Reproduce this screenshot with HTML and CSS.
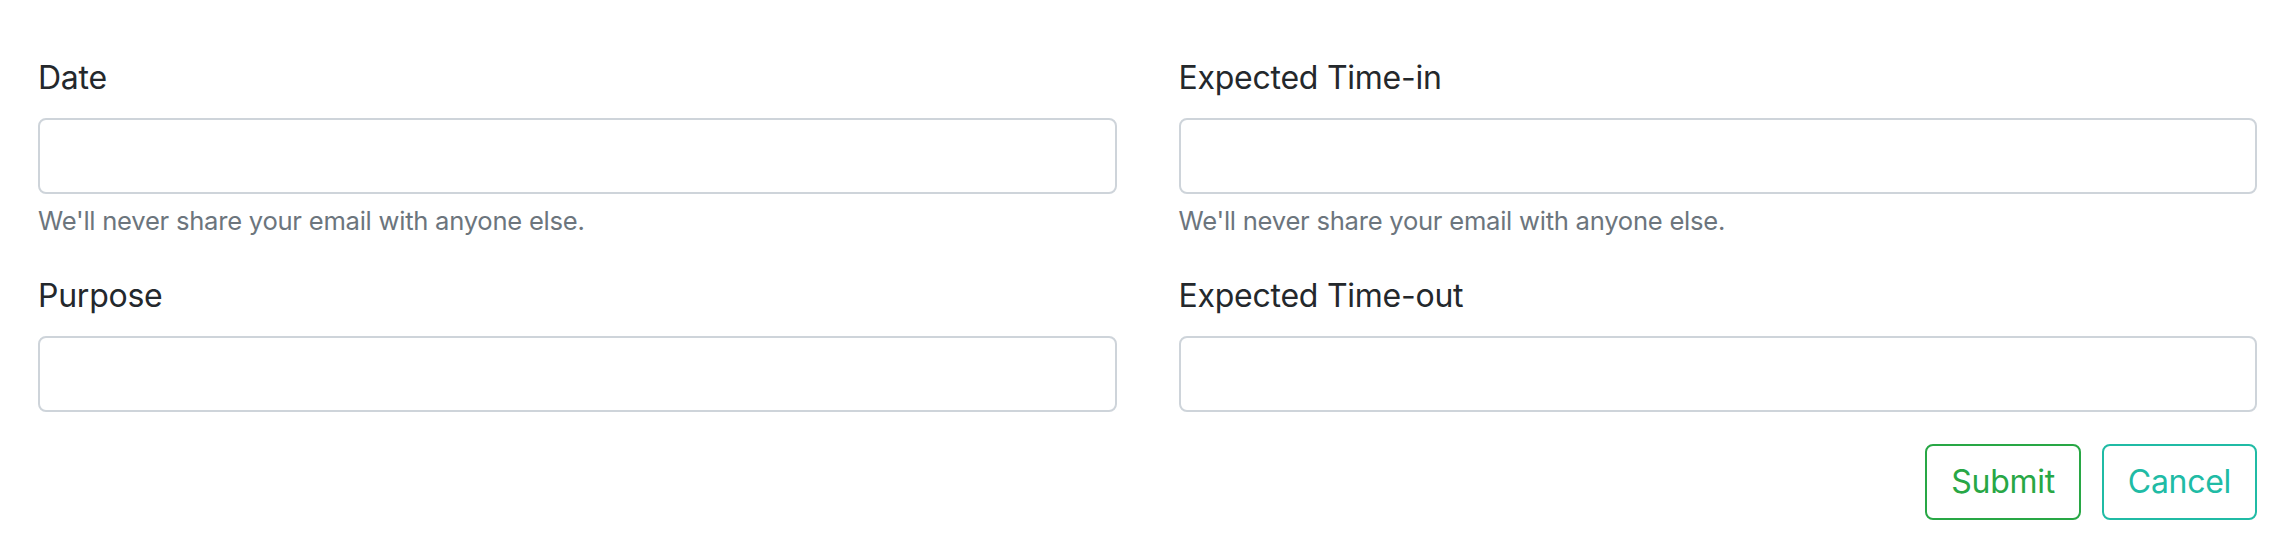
FILE: index.html
```html
<!DOCTYPE html>
<html lang="en">
<head>
<meta charset="utf-8">
<title>Visit form</title>
<link rel="stylesheet" href="styles.css">
</head>
<body>
<form class="form">
  <div class="grid">
    <div class="form-group">
      <label class="label" for="date">Date</label>
      <input class="control" id="date" type="text">
      <small class="help">We'll never share your email with anyone else.</small>
    </div>
    <div class="form-group">
      <label class="label" for="timein">Expected Time-in</label>
      <input class="control" id="timein" type="text">
      <small class="help">We'll never share your email with anyone else.</small>
    </div>
    <div class="form-group">
      <label class="label" for="purpose">Purpose</label>
      <input class="control" id="purpose" type="text">
    </div>
    <div class="form-group">
      <label class="label" for="timeout">Expected Time-out</label>
      <input class="control" id="timeout" type="text">
    </div>
  </div>
  <div class="actions">
    <button type="submit" class="btn btn-submit">Submit</button>
    <button type="button" class="btn btn-cancel">Cancel</button>
  </div>
</form>
</body>
</html>
```

FILE: styles.css
```css
html, body {
  margin: 0;
  padding: 0;
  background: #ffffff;
}

body {
  font-family: Inter, "Noto Sans", "Liberation Sans", sans-serif;
  font-size: 32px;
  line-height: 1.5;
  color: #212529;
  letter-spacing: -0.25px;
}

.form {
  padding: 54px 33px 0 38px;
}

.grid {
  display: grid;
  grid-template-columns: 1fr 1fr;
  column-gap: 62px;
}

.form-group {
  display: flex;
  flex-direction: column;
  margin-bottom: 32px;
}

.label {
  display: block;
  margin-bottom: 16px;
  font-size: 32px;
  line-height: 48px;
  color: #24282c;
}

.control {
  display: block;
  box-sizing: border-box;
  width: 100%;
  height: 76px;
  margin: 0;
  padding: 12px 24px;
  font-family: inherit;
  font-size: 32px;
  color: #495057;
  background: #ffffff;
  border: 2px solid #ced4da;
  border-radius: 8px;
  outline: none;
}

.help {
  display: block;
  margin-top: 8px;
  font-size: 25.6px;
  line-height: 38.4px;
  color: #6c757d;
}

.actions {
  display: flex;
  justify-content: flex-end;
  gap: 21px;
}

.btn {
  box-sizing: border-box;
  height: 76px;
  padding: 12px 24px;
  font-family: inherit;
  font-size: 32px;
  line-height: 48px;
  letter-spacing: -0.3px;
  background: transparent;
  border: 2px solid;
  border-radius: 8px;
  cursor: pointer;
}

.btn-submit {
  color: #28a745;
  border-color: #28a745;
}

.btn-cancel {
  color: #20bba5;
  border-color: #20bba5;
}
```
